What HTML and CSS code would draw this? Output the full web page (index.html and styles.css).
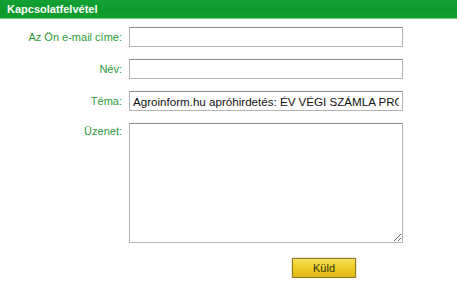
FILE: index.html
```html
<!DOCTYPE html>
<html lang="hu">
<head>
<meta charset="utf-8">
<title>Kapcsolatfelvétel</title>
<link rel="stylesheet" href="styles.css">
</head>
<body>
<div class="panel">
  <div class="header">Kapcsolatfelvétel</div>
  <form class="form">
    <label class="label" for="email">Az Ön e-mail címe:</label>
    <input class="field" id="email" type="text">
    <label class="label" for="nev">Név:</label>
    <input class="field" id="nev" type="text">
    <label class="label" for="tema">Téma:</label>
    <input class="field" id="tema" type="text" value="Agroinform.hu apróhirdetés: ÉV VÉGI SZÁMLA PROBLÉMA">
    <label class="label label-top" for="uzenet">Üzenet:</label>
    <textarea class="area" id="uzenet"></textarea>
    <div class="actions">
      <button class="send" type="button">Küld</button>
    </div>
  </form>
</div>
</body>
</html>
```

FILE: styles.css
```css
html, body {
  margin: 0;
  padding: 0;
  background: #ffffff;
}
body {
  font-family: "Liberation Sans", Arial, sans-serif;
}
.panel {
  width: 457px;
}
.header {
  height: 19px;
  box-sizing: border-box;
  padding: 3px 0 0 7px;
  font-size: 11px;
  font-weight: bold;
  color: #ffffff;
  background: linear-gradient(#14a034, #0b9a2a 60%, #12a030);
  border-bottom: 1px solid #7cc88a;
}
.form {
  display: grid;
  grid-template-columns: 122px 274px;
  column-gap: 7px;
  row-gap: 12px;
  padding-top: 8px;
  margin: 0;
}
.label {
  font-size: 11px;
  color: #2e9a3a;
  text-align: right;
  align-self: center;
  padding-bottom: 1px;
}
.label-top {
  align-self: start;
  padding-top: 2px;
}
.field, .area {
  box-sizing: border-box;
  margin: 0;
  border: 1px solid #b4b4b4;
  border-top-color: #8c8c8c;
  background: #ffffff;
  font-family: "Liberation Sans", Arial, sans-serif;
  outline: none;
}
.field {
  height: 20px;
  padding: 0 3px;
  font-size: 11.6px;
  color: #111111;
}
.area {
  height: 120px;
  resize: both;
}
.actions {
  grid-column: 2;
  padding: 3px 0 0 163px;
}
.send {
  width: 64px;
  height: 20px;
  padding: 0;
  font-family: "Liberation Sans", Arial, sans-serif;
  font-size: 11px;
  color: #33360e;
  background: linear-gradient(#f7e25a, #ecca22 55%, #e0b81a);
  border: 1px solid #8c7a22;
  box-shadow: 0 0 2px #c8c0a0;
}
```
